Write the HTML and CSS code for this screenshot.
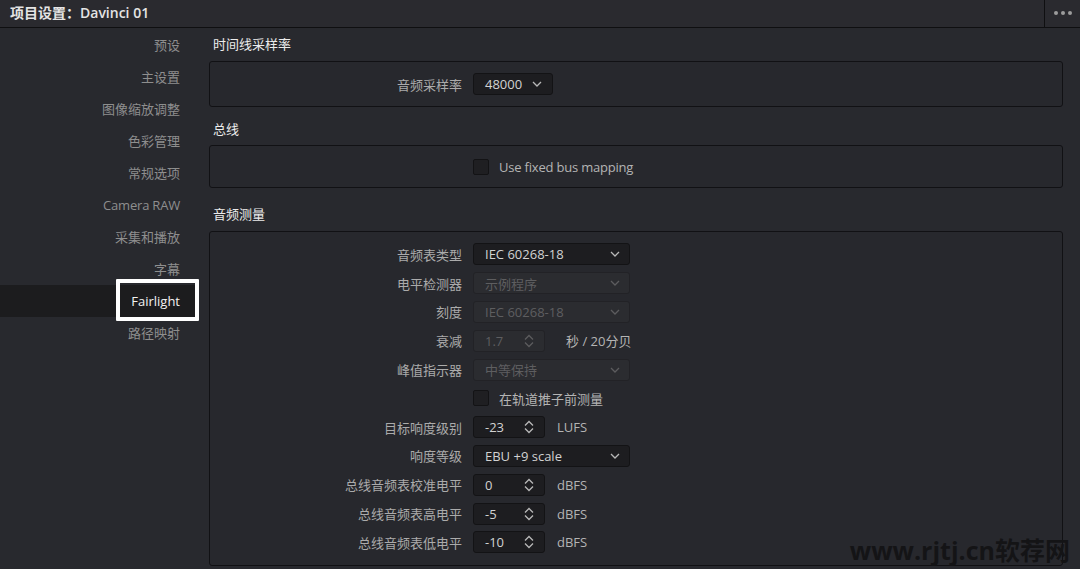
FILE: index.html
```html
<!DOCTYPE html>
<html lang="zh">
<head>
<meta charset="utf-8">
<title>项目设置</title>
<link rel="stylesheet" href="styles.css">
</head>
<body>
<div class="app">
  <header class="header">
    <div class="title">项目设置：Davinci 01</div>
    <div class="menu"><span class="dot"></span><span class="dot"></span><span class="dot"></span></div>
  </header>
  <div class="main">
    <nav class="sidebar">
      <div class="nav-item">预设</div>
      <div class="nav-item">主设置</div>
      <div class="nav-item">图像缩放调整</div>
      <div class="nav-item">色彩管理</div>
      <div class="nav-item">常规选项</div>
      <div class="nav-item latin">Camera RAW</div>
      <div class="nav-item">采集和播放</div>
      <div class="nav-item">字幕</div>
      <div class="nav-item active">Fairlight</div>
      <div class="nav-item">路径映射</div>
      <div class="highlight"></div>
    </nav>
    <section class="content">
      <h2 class="sec-title first">时间线采样率</h2>
      <div class="panel panel-rate">
        <div class="row">
          <div class="label">音频采样率</div>
          <div class="ctl"><div class="select small"><span>48000</span><svg class="chev" viewBox="0 0 10 6"><path d="M1 1 L5 5 L9 1"/></svg></div></div>
        </div>
      </div>
      <h2 class="sec-title second">总线</h2>
      <div class="panel panel-bus">
        <div class="row">
          <div class="label"></div>
          <div class="ctl"><span class="check"></span><span class="check-text latin">Use fixed bus mapping</span></div>
        </div>
      </div>
      <h2 class="sec-title third">音频测量</h2>
      <div class="panel panel-meter">
        <div class="row r"><div class="label">音频表类型</div><div class="ctl"><div class="select"><span>IEC 60268-18</span><svg class="chev" viewBox="0 0 10 6"><path d="M1 1 L5 5 L9 1"/></svg></div></div></div>
        <div class="row r"><div class="label">电平检测器</div><div class="ctl"><div class="select disabled"><span>示例程序</span><svg class="chev" viewBox="0 0 10 6"><path d="M1 1 L5 5 L9 1"/></svg></div></div></div>
        <div class="row r"><div class="label">刻度</div><div class="ctl"><div class="select disabled"><span>IEC 60268-18</span><svg class="chev" viewBox="0 0 10 6"><path d="M1 1 L5 5 L9 1"/></svg></div></div></div>
        <div class="row r"><div class="label">衰减</div><div class="ctl"><div class="spin disabled"><span>1.7</span><svg class="updown" viewBox="0 0 10 14"><path d="M1 5.5 L5 1.5 L9 5.5 M1 8.5 L5 12.5 L9 8.5"/></svg></div><span class="unit wide">秒 / 20分贝</span></div></div>
        <div class="row r"><div class="label">峰值指示器</div><div class="ctl"><div class="select disabled"><span>中等保持</span><svg class="chev" viewBox="0 0 10 6"><path d="M1 1 L5 5 L9 1"/></svg></div></div></div>
        <div class="row r"><div class="label"></div><div class="ctl"><span class="check"></span><span class="check-text">在轨道推子前测量</span></div></div>
        <div class="row r"><div class="label">目标响度级别</div><div class="ctl"><div class="spin"><span>-23</span><svg class="updown" viewBox="0 0 10 14"><path d="M1 5.5 L5 1.5 L9 5.5 M1 8.5 L5 12.5 L9 8.5"/></svg></div><span class="unit">LUFS</span></div></div>
        <div class="row r"><div class="label">响度等级</div><div class="ctl"><div class="select"><span>EBU +9 scale</span><svg class="chev" viewBox="0 0 10 6"><path d="M1 1 L5 5 L9 1"/></svg></div></div></div>
        <div class="row r"><div class="label">总线音频表校准电平</div><div class="ctl"><div class="spin"><span>0</span><svg class="updown" viewBox="0 0 10 14"><path d="M1 5.5 L5 1.5 L9 5.5 M1 8.5 L5 12.5 L9 8.5"/></svg></div><span class="unit">dBFS</span></div></div>
        <div class="row r"><div class="label">总线音频表高电平</div><div class="ctl"><div class="spin"><span>-5</span><svg class="updown" viewBox="0 0 10 14"><path d="M1 5.5 L5 1.5 L9 5.5 M1 8.5 L5 12.5 L9 8.5"/></svg></div><span class="unit">dBFS</span></div></div>
        <div class="row r"><div class="label">总线音频表低电平</div><div class="ctl"><div class="spin"><span>-10</span><svg class="updown" viewBox="0 0 10 14"><path d="M1 5.5 L5 1.5 L9 5.5 M1 8.5 L5 12.5 L9 8.5"/></svg></div><span class="unit">dBFS</span></div></div>
      </div>
    </section>
  </div>
  <div class="watermark">www.rjtj.cn软荐网</div>
</div>
</body>
</html>
```

FILE: styles.css
```css
* { box-sizing: border-box; }
html, body { margin: 0; padding: 0; }
body {
  width: 1080px;
  height: 569px;
  overflow: hidden;
  background: #28292e;
  font-family: "Open Sans", "Noto Sans CJK SC", sans-serif;
  font-size: 13px;
  color: #b0b0b0;
}
.app { position: relative; width: 1080px; height: 569px; }

.header {
  height: 28px;
  display: flex;
  background: #2a2a2f;
  border-bottom: 1px solid #0f0f11;
}
.title {
  flex: 1;
  padding-left: 10px;
  line-height: 26px;
  font-size: 14px;
  font-weight: 600;
  color: #e4e4e4;
}
.menu {
  width: 36px;
  border-left: 1px solid #0f0f11;
  display: flex;
  align-items: center;
  justify-content: center;
  gap: 3px;
  padding-bottom: 2px;
}
.dot { width: 4px; height: 4px; border-radius: 50%; background: #9c9c9c; }

.main { display: flex; }

.sidebar {
  position: relative;
  width: 196px;
  padding-top: 1px;
}
.nav-item {
  height: 32px;
  line-height: 32px;
  text-align: right;
  padding-right: 16px;
  color: #8e8e8e;
}
.latin { letter-spacing: -0.2px; }
.nav-item.active {
  background: #1c1c1e;
  color: #f2f2f2;
  padding-right: 16px;
}
.highlight {
  position: absolute;
  left: 116px;
  top: 251px;
  width: 83px;
  height: 42px;
  border: 4px solid #ffffff;
  border-radius: 1px;
}

.content {
  margin-left: 13px;
  width: 854px;
}
.sec-title {
  margin: 0;
  font-size: 13px;
  font-weight: 400;
  line-height: 18px;
  color: #ececec;
  padding-left: 4px;
}
.sec-title.first { padding-top: 7px; padding-bottom: 8px; }
.sec-title.second { padding-top: 13px; padding-bottom: 7px; }
.sec-title.third { padding-top: 17px; padding-bottom: 8px; }

.panel {
  border: 1px solid #111114;
  border-radius: 3px;
  background: #27282d;
}
.panel-rate { height: 46px; display: flex; align-items: center; }
.panel-bus { height: 43px; display: flex; align-items: center; }
.panel-meter { height: 335px; padding-top: 8px; }

.row {
  display: grid;
  grid-template-columns: 252px auto;
  column-gap: 11px;
  align-items: center;
  width: 100%;
}
.row.r { height: 28.8px; }
.label {
  text-align: right;
  color: #ababab;
  white-space: nowrap;
}
.ctl { display: flex; align-items: center; }

.select, .spin {
  height: 22px;
  background: #1d1d20;
  border: 1px solid #131315;
  border-radius: 3px;
  display: flex;
  align-items: center;
  justify-content: space-between;
  padding: 0 9px 0 11px;
  color: #d2d2d2;
}
.select { width: 157px; }
.select.small { width: 80px; padding-right: 10px; }
.spin { width: 72px; padding-right: 10px; }
.select.disabled, .spin.disabled {
  background: #2b2c30;
  border-color: #222226;
  color: #5e5e60;
}
.chev { width: 10px; height: 6px; }
.chev path, .updown path { fill: none; stroke: #b8b8b8; stroke-width: 1.3; }
.disabled .chev path, .disabled .updown path { stroke: #5c5c5e; }
.updown { width: 10px; height: 14px; }

.unit { margin-left: 12px; color: #b4b4b4; }
.unit.wide { margin-left: 21px; }

.check {
  width: 16px;
  height: 16px;
  background: #1f1f22;
  border: 1px solid #131315;
  border-radius: 2px;
}
.check-text { margin-left: 10px; color: #b4b4b4; }

.watermark {
  position: absolute;
  right: 10px;
  bottom: 2px;
  font-family: "Open Sans", "Noto Sans CJK SC", sans-serif;
  font-weight: 700;
  font-size: 25px;
  color: #141416;
}
```
